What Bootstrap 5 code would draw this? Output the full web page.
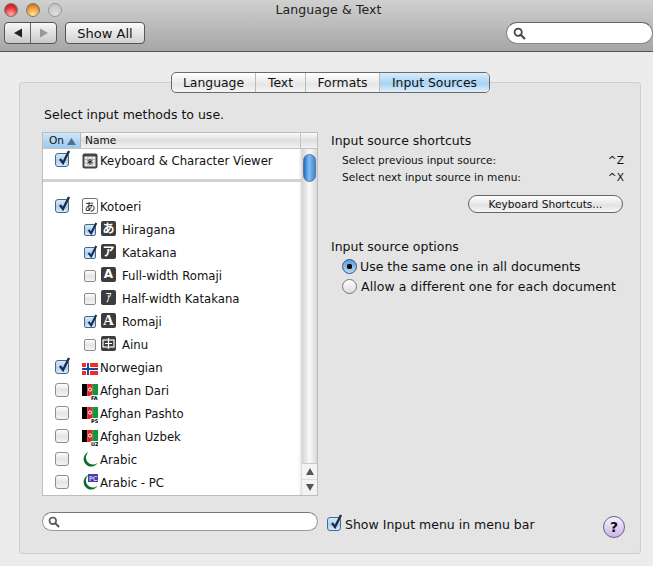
<!DOCTYPE html>
<html lang="en"><head><meta charset="utf-8"><title>Language &amp; Text</title>
<link rel="stylesheet" href="https://cdn.jsdelivr.net/npm/bootstrap@5.3.0/dist/css/bootstrap.min.css">
<style>
html,body{height:566px;overflow:hidden}
body{background:#ececec;color:#111;font-family:"DejaVu Sans","Liberation Sans",sans-serif;font-size:12.5px;line-height:1.2}
.tbar{height:52px;background:linear-gradient(#d0d0d0,#a6a6a6);border-bottom:1px solid #555;padding:3px 0 0 4px}
.ttop{display:grid;grid-template-columns:1fr auto 1fr;height:19px}
.ttl{font-size:12.5px;margin-top:-1px;color:#222;letter-spacing:.1px}
.lt{width:14px;height:14px;border-radius:50%;border:1px solid #777}
.lr{background:radial-gradient(circle at 50% 85%,#ffb3a8,#e8343a 55%,#a51520)}
.lo{background:radial-gradient(circle at 50% 85%,#ffe79a,#f29a38 55%,#b85a10)}
.lg{background:radial-gradient(circle at 50% 85%,#dedede,#bdbdbd);border-color:#999}
.tbtns{height:22px}
.navg{width:53px;height:22px;border:1px solid #555;border-radius:4px;background:linear-gradient(#f8f8f8,#c8c8c8);overflow:hidden}
.navg>span{flex:1;border-right:1px solid #666}
.navg>span:last-child{border-right:0}
.showb{width:80px;height:22px;margin-left:8px;padding:0;border:1px solid #555;border-radius:4px;background:linear-gradient(#fafafa,#d2d2d2);font-size:13px;color:#111;line-height:1}
.srch{width:147px;height:22px;background:#fff;border:1px solid #888;border-top-color:#666;border-radius:11px;padding-left:6px;margin-left:auto}
.tabsw{height:21px;margin-top:20px;margin-left:171px;position:relative;z-index:1}
.tabg{height:21px;width:319px;border:1px solid #6b6b6b;border-radius:5px;overflow:hidden;background:linear-gradient(#fff,#e6e6e6 60%,#f6f6f6)}
.tabx{border-right:1px solid #bbb;font-size:12.4px;line-height:19px;color:#111;text-align:center;flex:none}
.tabx:last-child{border:0}
.tb1{width:84px}
.tb2{width:50px}
.tb3{width:74px}
.tabon{background:linear-gradient(#d8ecfb,#a9d2f3 55%,#dff0fd);width:109px}
.pane{width:622px;height:472px;margin:-11px 0 0 19px;background:#e4e4e4;border:1px solid #cfcfcf;border-radius:3px;padding:24px 0 0 22px}
.hint{font-size:12.5px;height:25px;line-height:16px;padding-left:2px}
.cols{height:364px}
.lst{width:276px;height:364px;background:#fff;border:1px solid #bdbdbd;overflow:hidden}
.lhd{height:16px;border-bottom:1px solid #c4c4c4;background:linear-gradient(#fbfbfb,#dedede 50%,#f2f2f2);font-size:10.6px;line-height:14px}
.hon{width:38px;background:linear-gradient(#cfe6f9,#98c9ef);border-right:1px solid #b5b5b5;padding-left:6px;white-space:nowrap}
.hnm{flex:1;padding-left:4px;border-right:1px solid #c4c4c4}
.hcr{width:16px}
.lmain{width:260px;box-shadow:inset -3px 0 3px -2px #ccc}
.lpin{height:33px;border-bottom:3px solid #d2d2d2;padding-top:4px}
.lpin .nmt{padding-top:1px}
.lscr{padding-top:14px}
.rw{height:23px}
.rw .ck{margin-top:-4px}
.rsub .ck{margin-top:-2px}
.rtop{padding-left:12px}
.rsub{padding-left:41px}
.ck{flex:none;position:relative;display:block;width:14px;height:14px;border:1px solid #8d8d8d;border-radius:3px;background:linear-gradient(#fff,#e4e4e4 50%,#f4f4f4)}
.rsub .ck{width:12px;height:12px;border-radius:2px}
.ckon{border-color:#47688e;background:linear-gradient(#d8e9f8,#a8d0f0 55%,#d7ecfc)}
.ckm{position:absolute;left:1px;top:-4px;width:14px;height:16px;overflow:visible}
.rsub .ckm{width:12px;height:14px;top:-3px}
.ic{flex:none;display:flex;align-items:center;justify-content:center;width:16px;height:16px}
.rtop .ic{margin-left:13px;margin-right:2px}
.rsub .ic{margin-left:5px;margin-right:6px;width:15px;height:15px;background:#3c3c3c;border-radius:2px;color:#fff;font-weight:700;font-size:12px;line-height:1;margin-top:-5px;overflow:hidden}
.rtop .kot{background:#fff;border:1px solid #777;border-radius:2px;font-size:11px;font-family:"Noto Sans CJK JP",sans-serif;line-height:1;margin-top:-3px}
.rtop .cres{margin-top:-3px}
.jp{font-family:"Noto Sans CJK JP",sans-serif}
.rsub .srf{font-family:"Liberation Serif",serif;font-size:15px}
.nmt{white-space:nowrap;font-size:11.7px}
.nmk{margin-top:-1px}
.sbar{width:15px;background:linear-gradient(90deg,#d4d4d4,#fafafa 50%,#d8d8d8)}
.sthumb{height:28px;margin:5px 1px 0;border-radius:7px;background:linear-gradient(90deg,#1f6fc4,#86bdf0 45%,#3c8bdb);border:1px solid #5b7593}
.sarr{height:32px;margin-top:auto;background:#f3f3f3;border-top:1px solid #ccc;border-radius:0}
.sarr>div{height:16px;border-bottom:1px solid #ddd}
.rpane{margin-left:13px;width:294px}
.rh{font-size:12.5px;height:19px;line-height:19px;margin-top:-1px}
.rs{font-size:10.6px;height:17px;line-height:17px;padding:0 1px 0 11px}
.rs1{margin-top:2px}
.kbtn{display:block;width:155px;height:18px;padding:0;margin:9px 0 0 137px;border:1px solid #666;border-radius:9px;background:linear-gradient(#fff,#e2e2e2 60%,#f7f7f7);font-size:10.6px;line-height:15px;color:#111}
.opt{margin-top:24px}
.rd{height:20px;padding-left:11px;font-size:12.5px}
.rb{flex:none;display:block;width:15px;height:15px;margin-right:3px;border-radius:50%;border:1px solid #777;background:linear-gradient(#fff,#dcdcdc)}
.rb2{margin-right:4px}
.rt2{letter-spacing:.08px}
.rbon{border-color:#35557a;background:radial-gradient(circle,#111 0 2.6px,transparent 3px),linear-gradient(#5a9ae0,#b7daf7)}
.lfoot{margin-top:16px}
.srch2{width:276px;height:19px;background:#fff;border:1px solid #999;border-top-color:#777;border-radius:10px;padding-left:5px}
.shw{margin:-2px 0 0 9px;font-size:12.5px}
.shw .ck{margin-right:4px}
.hlp{width:22px;height:22px;border-radius:50%;margin:4px 15px 0 auto;border:1px solid #6f5a96;background:linear-gradient(#f7f2fc,#c9b4e6);font-weight:700;font-size:14px;line-height:1;color:#111}
</style></head>
<body>
<div class="tbar">
  <div class="ttop">
    <div class="d-flex gap-2"><span class="lt lr me-0"></span><span class="lt lo"></span><span class="lt lg"></span></div>
    <div class="ttl">Language &amp; Text</div><div></div>
  </div>
  <div class="d-flex tbtns">
    <div class="navg d-flex">
      <span class="d-flex align-items-center justify-content-center"><svg width="10" height="10" viewBox="0 0 10 10"><path d="M1 5 9 .5v9z" fill="#222"/></svg></span>
      <span class="d-flex align-items-center justify-content-center"><svg width="10" height="10" viewBox="0 0 10 10"><path d="M9 5 1 .5v9z" fill="#999"/></svg></span>
    </div>
    <button type="button" class="btn showb">Show All</button>
    <div class="srch d-flex align-items-center"><svg width="13" height="13" viewBox="0 0 13 13"><circle cx="5.2" cy="5.2" r="3.6" fill="none" stroke="#444" stroke-width="1.8"/><path d="M8 8l4 4" stroke="#444" stroke-width="2.2"/></svg></div>
  </div>
</div>

<div class="tabsw d-flex">
  <div class="tabg d-flex">
    <div class="tabx tb1">Language</div><div class="tabx tb2">Text</div><div class="tabx tb3">Formats</div><div class="tabx tabon">Input Sources</div>
  </div>
</div>

<div class="pane">
  <div class="hint">Select input methods to use.</div>
  <div class="cols d-flex">
    <div class="lst">
      <div class="lhd d-flex"><div class="hon">On <svg width="9" height="7" viewBox="0 0 9 7"><path d="M4.5 0 9 7H0z" fill="#50708e"/></svg></div><div class="hnm">Name</div><div class="hcr"></div></div>
      <div class="d-flex">
        <div class="lmain">
          <div class="lpin">
            <div class="d-flex rtop">
              <span class="ck ckon"><svg class="ckm" viewBox="0 0 14 16"><path d="M3 9l3 4 6-12" fill="none" stroke="#1d2c4a" stroke-width="2.4"/></svg></span>
              <span class="ic"><svg width="16" height="16" viewBox="0 0 16 16"><rect x=".5" y=".5" width="15" height="15" rx="2" fill="#444"/><rect x="2.5" y="3.5" width="11" height="10" fill="#eee"/><path d="M6 3.5v10M10 3.5v10M3 6.5h10M3 10h10" stroke="#999" stroke-width=".7"/><path d="M8 6v6M5.6 7.4l4.8 2.8M10.4 7.4l-4.8 2.8" stroke="#222" stroke-width="1"/></svg></span>
              <span class="nmt">Keyboard &amp; Character Viewer</span>
            </div>
          </div>
          <div class="lscr">
            <div class="rw d-flex align-items-center rtop"><span class="ck ckon"><svg class="ckm" viewBox="0 0 14 16"><path d="M3 9l3 4 6-12" fill="none" stroke="#1d2c4a" stroke-width="2.4"/></svg></span><span class="ic kot">あ</span><span class="nmt nmk">Kotoeri</span></div>
            <div class="rw d-flex align-items-center rsub"><span class="ck ckon"><svg class="ckm" viewBox="0 0 14 16"><path d="M3 9l3 4 6-12" fill="none" stroke="#1d2c4a" stroke-width="2.4"/></svg></span><span class="ic jp">あ</span><span class="nmt">Hiragana</span></div>
            <div class="rw d-flex align-items-center rsub"><span class="ck ckon"><svg class="ckm" viewBox="0 0 14 16"><path d="M3 9l3 4 6-12" fill="none" stroke="#1d2c4a" stroke-width="2.4"/></svg></span><span class="ic jp">ア</span><span class="nmt">Katakana</span></div>
            <div class="rw d-flex align-items-center rsub"><span class="ck"></span><span class="ic">A</span><span class="nmt">Full-width Romaji</span></div>
            <div class="rw d-flex align-items-center rsub"><span class="ck"></span><span class="ic jp fw-normal">ｱ</span><span class="nmt">Half-width Katakana</span></div>
            <div class="rw d-flex align-items-center rsub"><span class="ck ckon"><svg class="ckm" viewBox="0 0 14 16"><path d="M3 9l3 4 6-12" fill="none" stroke="#1d2c4a" stroke-width="2.4"/></svg></span><span class="ic srf">A</span><span class="nmt">Romaji</span></div>
            <div class="rw d-flex align-items-center rsub"><span class="ck"></span><span class="ic"><svg width="15" height="15" viewBox="0 0 15 15"><rect x="2" y="4" width="11" height="7" fill="none" stroke="#fff" stroke-width="1.2"/><path d="M7.5 2v11M4 7.5h7" stroke="#fff" stroke-width="1.2"/></svg></span><span class="nmt">Ainu</span></div>
            <div class="rw d-flex align-items-center rtop"><span class="ck ckon"><svg class="ckm" viewBox="0 0 14 16"><path d="M3 9l3 4 6-12" fill="none" stroke="#1d2c4a" stroke-width="2.4"/></svg></span><span class="ic"><svg width="16" height="12" viewBox="0 0 16 12"><rect width="16" height="12" fill="#ef2b2d"/><path d="M6 0v12M0 6h16" stroke="#fff" stroke-width="4"/><path d="M6 0v12M0 6h16" stroke="#124a9e" stroke-width="2"/></svg></span><span class="nmt">Norwegian</span></div>
            <div class="rw d-flex align-items-center rtop"><span class="ck"></span><span class="ic"><svg width="16" height="16" viewBox="0 0 16 16"><rect y="0" width="5.3" height="12" fill="#000"/><rect x="5.3" width="5.4" height="12" fill="#e8202a"/><rect x="10.7" width="5.3" height="12" fill="#0a9b3a"/><circle cx="8" cy="5.5" r="1.6" fill="none" stroke="#fff" stroke-width="1"/><rect x="8.5" y="11" width="7.5" height="5" fill="#fff"/><text x="9" y="15.6" font-size="5" font-weight="700" fill="#000">FA</text></svg></span><span class="nmt">Afghan Dari</span></div>
            <div class="rw d-flex align-items-center rtop"><span class="ck"></span><span class="ic"><svg width="16" height="16" viewBox="0 0 16 16"><rect y="0" width="5.3" height="12" fill="#000"/><rect x="5.3" width="5.4" height="12" fill="#e8202a"/><rect x="10.7" width="5.3" height="12" fill="#0a9b3a"/><circle cx="8" cy="5.5" r="1.6" fill="none" stroke="#fff" stroke-width="1"/><rect x="8.5" y="11" width="7.5" height="5" fill="#fff"/><text x="9" y="15.6" font-size="5" font-weight="700" fill="#000">PS</text></svg></span><span class="nmt">Afghan Pashto</span></div>
            <div class="rw d-flex align-items-center rtop"><span class="ck"></span><span class="ic"><svg width="16" height="16" viewBox="0 0 16 16"><rect y="0" width="5.3" height="12" fill="#000"/><rect x="5.3" width="5.4" height="12" fill="#e8202a"/><rect x="10.7" width="5.3" height="12" fill="#0a9b3a"/><circle cx="8" cy="5.5" r="1.6" fill="none" stroke="#fff" stroke-width="1"/><rect x="8.5" y="11" width="7.5" height="5" fill="#fff"/><text x="9" y="15.6" font-size="5" font-weight="700" fill="#000">UZ</text></svg></span><span class="nmt">Afghan Uzbek</span></div>
            <div class="rw d-flex align-items-center rtop"><span class="ck"></span><span class="ic cres"><svg width="16" height="16" viewBox="0 0 16 16"><path d="M6.5 1A7.5 7.5 0 1 0 15.5 12 7 7 0 0 1 6.5 1z" fill="#0a6a2c"/></svg></span><span class="nmt">Arabic</span></div>
            <div class="rw d-flex align-items-center rtop"><span class="ck"></span><span class="ic cres"><svg width="16" height="16" viewBox="0 0 16 16"><path d="M6.5 1A7.5 7.5 0 1 0 15.5 12 7 7 0 0 1 6.5 1z" fill="#0a6a2c"/><rect x="6" y="0" width="10" height="8" fill="#4a3db0"/><text x="7" y="6.6" font-size="6.5" fill="#fff">PC</text></svg></span><span class="nmt">Arabic - PC</span></div>
          </div>
        </div>
        <div class="sbar d-flex flex-column">
          <div class="sthumb"></div>
          <div class="sarr">
            <div class="d-flex align-items-center justify-content-center"><svg width="8" height="7" viewBox="0 0 8 7"><path d="M4 0l4 7H0z" fill="#555"/></svg></div>
            <div class="d-flex align-items-center justify-content-center"><svg width="8" height="7" viewBox="0 0 8 7"><path d="M4 7 8 0H0z" fill="#555"/></svg></div>
          </div>
        </div>
      </div>
    </div>
    <div class="rpane">
      <div class="rh">Input source shortcuts</div>
      <div class="rs rs1 d-flex justify-content-between"><span>Select previous input source:</span><span>^Z</span></div>
      <div class="rs d-flex justify-content-between"><span>Select next input source in menu:</span><span>^X</span></div>
      <button type="button" class="btn kbtn">Keyboard Shortcuts...</button>
      <div class="opt rh">Input source options</div>
      <div class="rd d-flex align-items-center"><span class="rb rbon"></span><span>Use the same one in all documents</span></div>
      <div class="rd d-flex align-items-center"><span class="rb rb2"></span><span class="rt2">Allow a different one for each document</span></div>
    </div>
  </div>
  <div class="d-flex lfoot">
    <div class="srch2 d-flex align-items-center"><svg width="12" height="12" viewBox="0 0 13 13"><circle cx="5.2" cy="5.2" r="3.6" fill="none" stroke="#555" stroke-width="1.8"/><path d="M8 8l4 4" stroke="#555" stroke-width="2.2"/></svg></div>
    <div class="shw d-flex align-items-center"><span class="ck ckon"><svg class="ckm" viewBox="0 0 14 16"><path d="M3 9l3 4 6-12" fill="none" stroke="#1d2c4a" stroke-width="2.4"/></svg></span><span>Show Input menu in menu bar</span></div>
    <div class="hlp d-flex align-items-center justify-content-center">?</div>
  </div>
</div>
<script src="https://cdn.jsdelivr.net/npm/bootstrap@5.3.0/dist/js/bootstrap.bundle.min.js"></script>
</body></html>
